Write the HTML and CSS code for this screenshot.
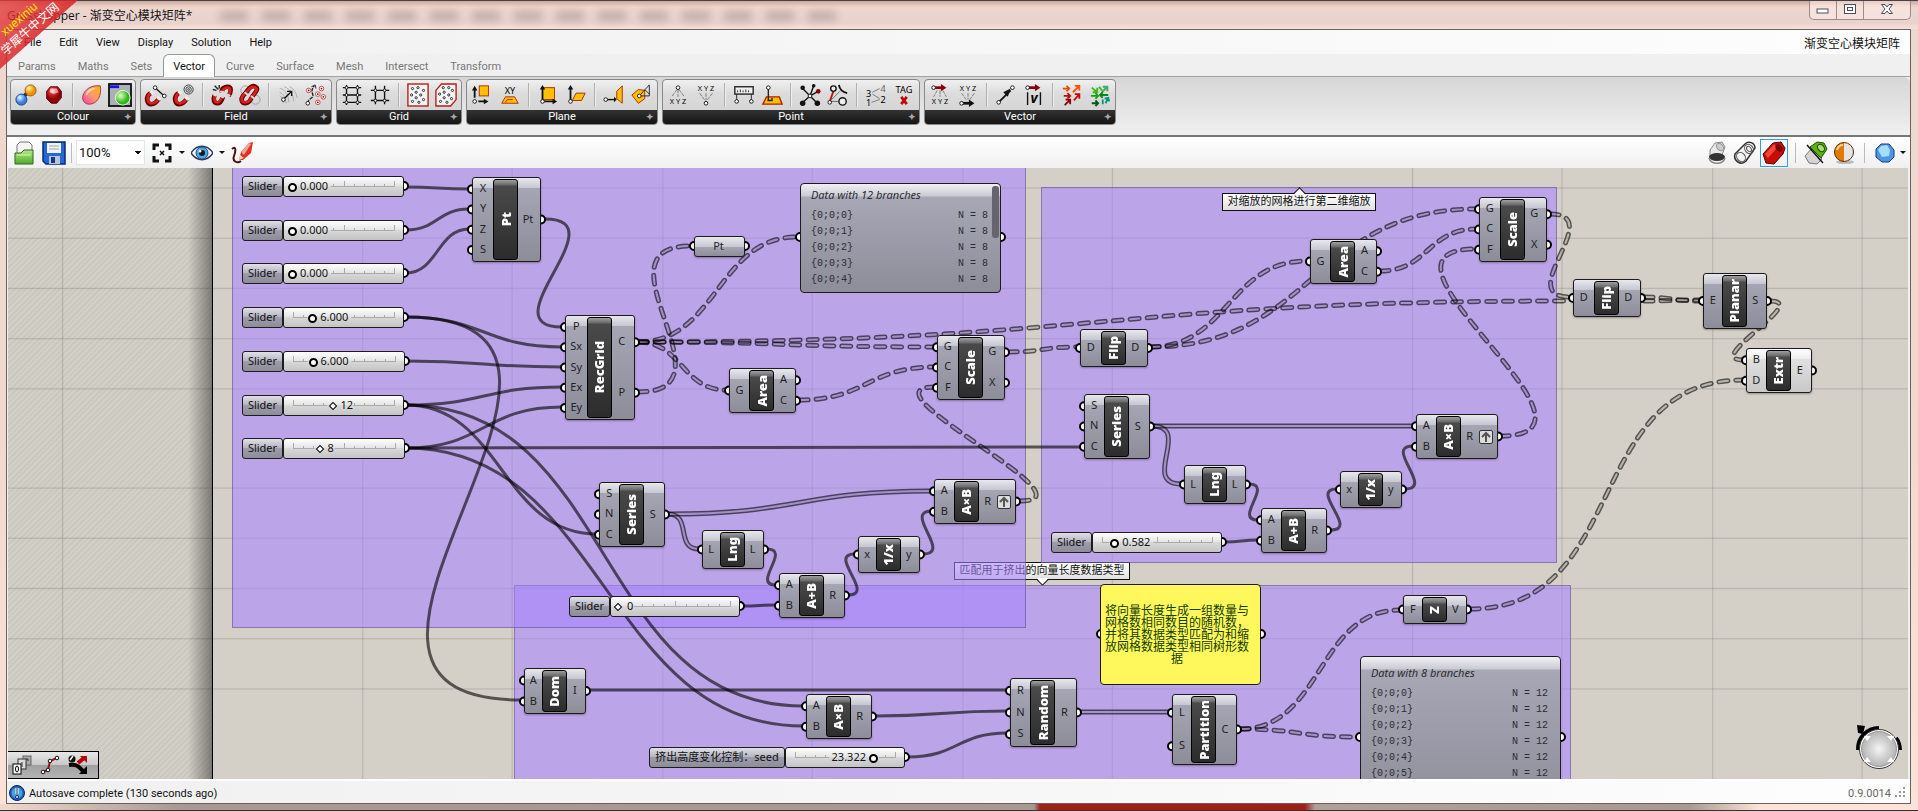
FILE: index.html
```
<!DOCTYPE html>
<html lang="en">
<head>
  <meta charset="UTF-8">
  <meta name="viewport" content="width=device-width, initial-scale=1.0">
  <title>Grasshopper - 渐变空心模块矩阵*</title>
  <link rel="stylesheet" href="styles.css">
</head>
<body>
  <svg class="defs" width="0" height="0" aria-hidden="true">
    <defs>
      <radialGradient id="gBlue" cx=".35" cy=".3"><stop offset="0" stop-color="#dff"/><stop offset="1" stop-color="#3c7ae0"/></radialGradient>
      <radialGradient id="gOrange" cx=".35" cy=".3"><stop offset="0" stop-color="#fff3a0"/><stop offset="1" stop-color="#f09000"/></radialGradient>
      <radialGradient id="gRed" cx=".4" cy=".25"><stop offset="0" stop-color="#ffd0d0"/><stop offset=".4" stop-color="#d8302c"/><stop offset="1" stop-color="#8e0008"/></radialGradient>
      <radialGradient id="gGreen" cx=".35" cy=".35"><stop offset="0" stop-color="#eaffc0"/><stop offset="1" stop-color="#2eb81c"/></radialGradient>
      <radialGradient id="gKnob"><stop offset="0" stop-color="#f4f4f4"/><stop offset="1" stop-color="#b4b4b4"/></radialGradient>
      <linearGradient id="gEgg" x1="1" y1="0" x2="0" y2="1"><stop offset="0" stop-color="#ffb400"/><stop offset=".5" stop-color="#ff9a70"/><stop offset="1" stop-color="#f040a8"/></linearGradient>
      <linearGradient id="gFolder" x1="0" y1="0" x2="0" y2="1"><stop offset="0" stop-color="#b8e88a"/><stop offset="1" stop-color="#4faa2c"/></linearGradient>
      <linearGradient id="gHalf"><stop offset=".5" stop-color="#e07a00"/><stop offset=".5" stop-color="#e4e4e4"/></linearGradient>
    </defs>
  </svg>

  <div class="window">
    <header class="titlebar">
      <div class="glass"></div>
      <h1>Grasshopper - 渐变空心模块矩阵*</h1>
      <div class="window-buttons">
        <button aria-label="Minimize"><svg width="14" height="14"><rect x="1" y="6" width="11" height="4" fill="#fff" stroke="#4a4f60"/></svg></button>
        <button aria-label="Maximize"><svg width="14" height="14"><rect x="1.5" y="1.5" width="11" height="9" fill="#fff" stroke="#4a4f60"/><rect x="4.5" y="4.5" width="5" height="3" fill="#fff" stroke="#4a4f60"/></svg></button>
        <button aria-label="Close"><svg width="14" height="14"><path d="M1.5 1.5h3.5l2 2.5 2-2.5h3.5l-3.5 4.500 3.500 4.500h-3.500l-2-2.500-2 2.500h-3.500l3.500-4.500z" fill="#fff" stroke="#4a4f60"/></svg></button>
      </div>
    </header>

    <div class="client">
      <nav class="menubar">
        <button>File</button>
        <button>Edit</button>
        <button>View</button>
        <button>Display</button>
        <button>Solution</button>
        <button>Help</button>
        <span class="document-name">渐变空心模块矩阵</span>
      </nav>

      <nav class="tabs">
        <button>Params</button>
        <button>Maths</button>
        <button>Sets</button>
        <button class="active">Vector</button>
        <button>Curve</button>
        <button>Surface</button>
        <button>Mesh</button>
        <button>Intersect</button>
        <button>Transform</button>
      </nav>

      <div class="ribbon">
        <section class="panel-group">
          <div class="tools">
            <button aria-label="Colour blend"><svg viewBox="0 0 24 24"><path d="M9 14l6-6" stroke="#333" stroke-width="4"/><circle cx="7" cy="17" r="6" fill="url(#gBlue)" stroke="#123a8a"/><circle cx="17" cy="7" r="6" fill="url(#gOrange)" stroke="#a05a00"/></svg></button>
            <button aria-label="Colour sphere"><svg viewBox="0 0 24 24"><path d="M8 3h8l4 5v7l-5 6H9l-5-5V8z" fill="url(#gRed)" stroke="#5c0006"/><path d="M8 5h7l2 4-5 2-5-2z" fill="#fff" opacity=".55"/></svg></button>
            <i></i>
            <button aria-label="Gradient egg"><svg viewBox="0 0 24 24"><path d="M21 2c2 10-3 20-12 20C4 22 1 18 2 13 4 6 11 1 21 2z" fill="url(#gEgg)" stroke="#a8284c"/><path d="M6 12c1-4 5-7 9-7" stroke="#fff" stroke-width="2" opacity=".6" fill="none"/></svg></button>
            <button aria-label="Colour picker"><svg viewBox="0 0 24 24"><rect x="0" y="0" width="24" height="24" fill="#aab0b8" stroke="#111" stroke-width="2"/><path d="M1 3h10" stroke="#11e" stroke-width="3"/><circle cx="15" cy="15" r="8" fill="url(#gGreen)" stroke="#e8ffe0"/></svg></button>
          </div>
          <h2>Colour<b>✦</b></h2>
        </section>

        <section class="panel-group">
          <div class="tools">
            <button aria-label="Line charge"><svg viewBox="0 0 24 24"><path d="M6 10c-6 4-4 12 1 12 4 0 6-3 8-6" fill="none" stroke="#600" stroke-width="5"/><path d="M6 10c-5 4-3 11 1 11 3 0 6-2 8-5" fill="none" stroke="#d82020" stroke-width="3"/><path d="M6 8l3 3M13 14l4 3" stroke="#eee" stroke-width="3"/><path d="M11 4l10 9" stroke="#111" stroke-width="1.5"/><circle cx="11" cy="4" r="2" fill="#fff" stroke="#111"/><circle cx="21" cy="13" r="2" fill="#fff" stroke="#111"/></svg></button>
            <button aria-label="Point charge"><svg viewBox="0 0 24 24"><path d="M6 10c-6 4-4 12 1 12 4 0 6-3 8-6" fill="none" stroke="#600" stroke-width="5"/><path d="M6 10c-5 4-3 11 1 11 3 0 6-2 8-5" fill="none" stroke="#d82020" stroke-width="3"/><path d="M6 8l3 3M13 14l4 3" stroke="#eee" stroke-width="3"/><g fill="none" stroke="#333"><circle cx="17" cy="6" r="5"/><circle cx="17" cy="6" r="3"/><circle cx="17" cy="6" r="1"/></g></svg></button>
            <i></i>
            <button aria-label="Break field"><svg viewBox="0 0 24 24"><path d="M4 12c-2 5-1 9 3 9s5-4 6-7M12 9c-1-4 3-6 6-6 5 0 4 6 1 10" fill="none" stroke="#600" stroke-width="5"/><path d="M4 13c-1 4 0 7 3 7s4-3 5-6M13 9c-1-3 2-5 5-5 4 0 3 5 1 8" fill="none" stroke="#d82020" stroke-width="3"/><path d="M2 11l4 2M10 13l4 2M10 8l4 1M17 11l4 2" stroke="#ddd" stroke-width="2"/><path d="M2 6l4 1M4 2l4 4M9 1v4" stroke="#222" stroke-width="1.5"/></svg></button>
            <button aria-label="Merge fields"><svg viewBox="0 0 24 24"><g fill="none" stroke="#999"><circle cx="7" cy="7" r="5"/><circle cx="18" cy="17" r="5"/></g><path d="M7 10c-6 5-5 11 0 11s6-5 8-8c3-4 7-8 3-10-4-3-8 3-11 7" fill="none" stroke="#600" stroke-width="5"/><path d="M7 10c-6 5-5 10 0 10s6-4 8-7c3-4 6-7 3-9-4-3-8 2-11 6" fill="none" stroke="#d82020" stroke-width="3"/><path d="M6 9l4 3M13 13l4 3" stroke="#ddd" stroke-width="2"/></svg></button>
            <i></i>
            <button aria-label="Evaluate field"><svg viewBox="0 0 24 24"><g stroke="#aaa" fill="none"><path d="M3 5c4 0 9 4 10 15M3 9c3 1 6 5 7 12M8 3c6 2 10 8 10 16M14 3c4 2 7 6 8 12M3 13c2 1 4 4 4 8"/></g><path d="M7 17l9-9m-5 0h5v5" fill="none" stroke="#111" stroke-width="1.5"/><circle cx="7" cy="17" r="2" fill="#fff" stroke="#111"/></svg></button>
            <button aria-label="Field line"><svg viewBox="0 0 24 24"><path d="M3 21c0-6 8-5 5-11-1-3 0-5 2-8" fill="none" stroke="#222" stroke-width="1.5" stroke-dasharray="4 1"/><path d="M7 3l4-2 1 4" fill="none" stroke="#222"/><g fill="#fff" stroke="#b04848"><circle cx="4" cy="7" r="2.5"/><circle cx="18" cy="5" r="2.5"/><circle cx="14" cy="11" r="2.5"/><circle cx="20" cy="14" r="2.5"/><circle cx="14" cy="20" r="2.5"/></g><g fill="#900"><circle cx="4" cy="7" r="1"/><circle cx="18" cy="5" r="1"/><circle cx="14" cy="11" r="1"/><circle cx="20" cy="14" r="1"/><circle cx="14" cy="20" r="1"/></g><circle cx="3" cy="21" r="2" fill="#fff" stroke="#111"/></svg></button>
          </div>
          <h2>Field<b>✦</b></h2>
        </section>

        <section class="panel-group">
          <div class="tools">
            <button aria-label="Rectangular grid"><svg viewBox="0 0 24 24"><path d="M2 4h20M2 12h20M2 20h20M6 1v22M18 1v22" stroke="#111" stroke-width="1.5"/><g fill="#fff" stroke="#111"><circle cx="6" cy="4" r="1.5"/><circle cx="18" cy="4" r="1.5"/><circle cx="6" cy="12" r="1.5"/><circle cx="18" cy="12" r="1.5"/><circle cx="6" cy="20" r="1.5"/><circle cx="18" cy="20" r="1.5"/></g></svg></button>
            <button aria-label="Square grid"><svg viewBox="0 0 24 24"><path d="M2 7h20M2 18h20M7 2v20M17 2v20" stroke="#111" stroke-width="1.5"/><g fill="#fff" stroke="#111"><circle cx="7" cy="7" r="1.5"/><circle cx="17" cy="7" r="1.5"/><circle cx="7" cy="18" r="1.5"/><circle cx="17" cy="18" r="1.5"/></g></svg></button>
            <i></i>
            <button aria-label="Populate 2D"><svg viewBox="0 0 24 24"><rect x="1" y="0" width="22" height="24" fill="#f4f4f4" stroke="#b81c10" stroke-width="1.5"/><g fill="none" stroke="#222"><circle cx="6" cy="5" r="1.2"/><circle cx="12" cy="4" r="1.2"/><circle cx="18" cy="7" r="1.2"/><circle cx="10" cy="9" r="1.2"/><circle cx="5" cy="12" r="1.2"/><circle cx="15" cy="12" r="1.2"/><circle cx="10" cy="15" r="1.2"/><circle cx="6" cy="19" r="1.2"/><circle cx="13" cy="20" r="1.2"/><circle cx="18" cy="17" r="1.2"/></g></svg></button>
            <button aria-label="Populate 3D"><svg viewBox="0 0 24 24"><path d="M7 0h16v17l-6 7H1V7z" fill="#f4f4f4" stroke="#b81c10" stroke-width="1.5"/><g fill="none" stroke="#222"><circle cx="9" cy="4" r="1.2"/><circle cx="15" cy="4" r="1.2"/><circle cx="19" cy="7" r="1.2"/><circle cx="10" cy="9" r="1.2"/><circle cx="5" cy="11" r="1.2"/><circle cx="15" cy="12" r="1.2"/><circle cx="10" cy="15" r="1.2"/><circle cx="6" cy="19" r="1.2"/><circle cx="13" cy="20" r="1.2"/><circle cx="18" cy="16" r="1.2"/></g></svg></button>
          </div>
          <h2>Grid<b>✦</b></h2>
        </section>

        <section class="panel-group">
          <div class="tools">
            <button aria-label="Align plane"><svg viewBox="0 0 24 24"><rect x="9" y="2" width="10" height="11" fill="#ffc000" stroke="#a82800"/><path d="M4 15V5M8 19h7" stroke="#111" stroke-width="2"/><path d="M1 7l3-5 3 5zM14 16l5 3-5 3z" fill="#111"/><circle cx="4" cy="19" r="2" fill="#fff" stroke="#111"/></svg></button>
            <button aria-label="XY plane"><svg viewBox="0 0 24 24"><path d="M7 14h10l4 7H3z" fill="#ffc000" stroke="#a82800"/><path d="M7 20l2-3h6" fill="none" stroke="#a82800"/><text x="12" y="11" text-anchor="middle" font-size="10">XY</text></svg></button>
            <i></i>
            <button aria-label="Plane offset"><svg viewBox="0 0 24 24"><rect x="6" y="4" width="13" height="13" fill="#ffc000" stroke="#a82800"/><path d="M6 20V5M6 19h12" stroke="#111" stroke-width="2"/><path d="M3 6l3-5 3 5zM17 16l5 3-5 3z" fill="#111"/><circle cx="6" cy="19" r="2" fill="#fff" stroke="#111"/></svg></button>
            <button aria-label="Plane origin"><svg viewBox="0 0 24 24"><path d="M8 18l4-8h10l-4 8z" fill="#ffc000" stroke="#a82800"/><path d="M6 19V5" stroke="#111" stroke-width="2"/><path d="M3 6l3-5 3 5z" fill="#111"/><circle cx="6" cy="19" r="2" fill="#fff" stroke="#111"/></svg></button>
            <i></i>
            <button aria-label="Plane closest point"><svg viewBox="0 0 24 24"><path d="M15 8l6-6v19l-6-5z" fill="#ffc000" stroke="#a82800"/><path d="M4 17h9" stroke="#111" stroke-width="1.5"/><circle cx="3" cy="17" r="2" fill="#fff" stroke="#111"/><path d="M12 14l3 3-3 3z" fill="#111"/></svg></button>
            <button aria-label="Rotate plane"><svg viewBox="0 0 24 24"><path d="M1 12l7-6 7 1v9l-7 5z" fill="#ffc000" stroke="#a82800"/><path d="M8 14L20 1v12H9M15 6l5 5" fill="none" stroke="#222"/><circle cx="9" cy="13" r="2" fill="#fff" stroke="#111"/></svg></button>
          </div>
          <h2>Plane<b>✦</b></h2>
        </section>

        <section class="panel-group">
          <div class="tools">
            <button aria-label="Deconstruct point"><svg viewBox="0 0 24 24"><path d="M11 6l-6 8M12 6v8M13 6l6 8" stroke="#777" stroke-dasharray="4 1"/><circle cx="12" cy="4" r="2" fill="#fff" stroke="#111"/><text x="12" y="22" text-anchor="middle" font-size="8">X Y Z</text></svg></button>
            <button aria-label="Construct point"><svg viewBox="0 0 24 24"><path d="M5 10l6 8M12 10v8M19 10l-6 8" stroke="#777" stroke-dasharray="4 1"/><circle cx="12" cy="21" r="2" fill="#fff" stroke="#111"/><text x="12" y="8" text-anchor="middle" font-size="8">X Y Z</text></svg></button>
            <i></i>
            <button aria-label="Distance"><svg viewBox="0 0 24 24"><path d="M4 10v8M20 10v8" stroke="#222"/><rect x="2" y="3" width="20" height="8" fill="#eee" stroke="#222" stroke-width="1.5"/><path d="M5 9V7M8 9V6M11 9V7M14 9V6M17 9V7" stroke="#222"/><circle cx="4" cy="19" r="2" fill="#fff" stroke="#111"/><circle cx="20" cy="19" r="2" fill="#fff" stroke="#111"/></svg></button>
            <button aria-label="Project point"><svg viewBox="0 0 24 24"><path d="M6 14h14l3 8H2z" fill="#ffc000" stroke="#b02000" stroke-width="1.5"/><path d="M7 18h5v-3M8 5v13" fill="none" stroke="#222" stroke-width="1.5"/><circle cx="8" cy="4" r="2" fill="#fff" stroke="#111"/></svg></button>
            <i></i>
            <button aria-label="Closest points"><svg viewBox="0 0 24 24"><path d="M12 13L4 5M12 13L16 2M12 13L3 21M12 13l8 8M12 13l9-5" stroke="#111" stroke-width="1.5"/><g fill="#111"><circle cx="4" cy="4" r="2.500"/><circle cx="16" cy="2" r="2"/><circle cx="4" cy="21" r="3"/><circle cx="20" cy="21" r="3"/></g><circle cx="21" cy="8" r="2.5" fill="#8a0008"/><circle cx="12" cy="13" r="2" fill="#fff" stroke="#111"/></svg></button>
            <button aria-label="Pull point"><svg viewBox="0 0 24 24"><path d="M3 19L7 8" stroke="#c01010" stroke-width="2"/><path d="M3 19L14 8M3 19h10" stroke="#666"/><path d="M13 1c1 6 4 8 9 9" stroke="#111" stroke-width="2" fill="none"/><g fill="#eee" stroke="#111" stroke-width="1.5"><circle cx="7" cy="5" r="3"/><circle cx="17" cy="19" r="4"/></g><circle cx="3" cy="20" r="2" fill="#fff" stroke="#111"/></svg></button>
            <i></i>
            <button aria-label="Sort points"><svg viewBox="0 0 24 24"><path d="M8 9l8-4M8 11l8 5M7 20l9-3" stroke="#777"/><text x="1" y="14" font-size="10">3</text><text x="17" y="9" font-size="10" fill="#666">4</text><text x="17" y="21" font-size="10">2</text><text x="1" y="24" font-size="10">1</text></svg></button>
            <button aria-label="Text tag"><svg viewBox="0 0 24 24"><text x="12" y="10" text-anchor="middle" font-size="10">TAG</text><path d="M9 14l6 8M15 14l-6 8" stroke="#c00808" stroke-width="3"/></svg></button>
          </div>
          <h2>Point<b>✦</b></h2>
        </section>

        <section class="panel-group">
          <div class="tools">
            <button aria-label="Deconstruct vector"><svg viewBox="0 0 24 24"><path d="M6 4h8" stroke="#8a0008" stroke-width="3"/><path d="M13 0l6 4-6 4z" fill="#8a0008"/><path d="M9 7l-4 7M12 7v7M15 7l4 7" stroke="#777" stroke-dasharray="4 1"/><circle cx="5" cy="4" r="2" fill="#fff" stroke="#111"/><text x="12" y="22" text-anchor="middle" font-size="8">X Y Z</text></svg></button>
            <button aria-label="Vector XYZ"><svg viewBox="0 0 24 24"><path d="M5 10l5 7M12 10v7M19 10l-5 7" stroke="#777" stroke-dasharray="4 1"/><path d="M6 21h8" stroke="#111" stroke-width="3"/><path d="M13 17l6 4-6 4z" fill="#111"/><circle cx="5" cy="21" r="2" fill="#fff" stroke="#111"/><text x="12" y="8" text-anchor="middle" font-size="8">X Y Z</text></svg></button>
            <i></i>
            <button aria-label="Vector 2Pt"><svg viewBox="0 0 24 24"><path d="M5 19L17 7" stroke="#111" stroke-width="2"/><path d="M9 9l8-4-3 9z" fill="#111"/><circle cx="4" cy="20" r="2" fill="#fff" stroke="#111"/><circle cx="19" cy="4" r="2" fill="#fff" stroke="#111"/></svg></button>
            <button aria-label="Vector length"><svg viewBox="0 0 24 24"><path d="M6 4h8" stroke="#8a0008" stroke-width="3"/><path d="M13 0l6 4-6 4z" fill="#8a0008"/><circle cx="5" cy="4" r="2" fill="#fff" stroke="#111"/><path d="M5 9v14M19 9v14" stroke="#111" stroke-width="1.5"/><text x="12" y="21" text-anchor="middle" font-size="15" font-weight="bold" font-style="italic">v</text></svg></button>
            <i></i>
            <button aria-label="Amplitude"><svg viewBox="0 0 24 24"><g stroke-width="2" fill="none"><path d="M2 5h7M6 2l3 3-3 3" stroke="#e05010"/><path d="M13 9l7-7m-5 0h5v5" stroke="#ff5008"/><path d="M3 13h7M7 10l3 3-3 3" stroke="#b81010"/><path d="M14 18l6-7m-5 0h5v5" stroke="#c80808"/><path d="M4 23l6-6M5 17h5v5" stroke="#8a0008"/></g></svg></button>
            <button aria-label="Unit vector"><svg viewBox="0 0 24 24"><g stroke-width="2" fill="none"><path d="M3 4l6 5M9 4v5H4" stroke="#38b818"/><path d="M14 9l6-6m-5 0h5v5" stroke="#40a868"/><path d="M2 13h8M7 10l3 3-3 3" stroke="#18a010"/><path d="M21 12h-8M15 9l-3 3 3 3" stroke="#088818"/><path d="M3 21h7M7 18l3 3-3 3" stroke="#005818"/><path d="M15 22v-5M18 21l3-6m-4 1l4-1 1 4" stroke="#009878"/><path d="M11 3l3 4" stroke="#38b818"/></g></svg></button>
          </div>
          <h2>Vector<b>✦</b></h2>
        </section>
      </div>

      <div class="toolbar">
        <button class="tool" aria-label="Open"><svg width="20" height="24" viewBox="0 0 20 24"><path d="M3 4l3-3h9l3 3v9H3z" fill="#f4f4f4" stroke="#777"/><path d="M1 12h6l3-3h9v14H1z" fill="url(#gFolder)" stroke="#2d6b18"/><path d="M3 14h14" stroke="#d8f8b8"/></svg></button>
        <button class="tool" aria-label="Save"><svg width="24" height="24" viewBox="0 0 24 24"><path d="M1 1h22v22H4l-3-3z" fill="#2468d8" stroke="#0a2a70" stroke-width="1.5"/><rect x="5" y="2" width="14" height="10" fill="#f0f4f8"/><path d="M7 5h10M7 8h10" stroke="#9aa"/><rect x="7" y="15" width="11" height="8" fill="#b8c4d8"/><rect x="9" y="16" width="4" height="6" fill="#123a8a"/></svg></button>
        <i class="sep"></i>
        <select class="zoom" aria-label="Zoom"><option>100%</option></select>
        <button class="tool" aria-label="Zoom extents"><svg width="20" height="20" viewBox="0 0 20 20"><path d="M2 7V2h5M13 2h5v5M18 13v5h-5M7 18H2v-5" fill="none" stroke="#111" stroke-width="3"/><path d="M8 8l4 4M12 8l-4 4" stroke="#111" stroke-width="1.5"/></svg></button>
        <button class="arrow" aria-label="Zoom options"></button>
        <button class="tool" aria-label="Preview"><svg width="22" height="18" viewBox="0 0 22 18"><path d="M0 9C6 0 16 0 22 9 16 18 6 18 0 9z" fill="#f4fbff" stroke="#335" stroke-width="1.5"/><circle cx="11" cy="9" r="6" fill="#4aa8e0" stroke="#165080"/><circle cx="11" cy="9" r="3" fill="#0a1828"/><circle cx="9" cy="7" r="1.5" fill="#fff"/></svg></button>
        <button class="arrow" aria-label="Preview options"></button>
        <button class="tool" aria-label="Sketch"><svg width="24" height="22" viewBox="0 0 24 22"><path d="M2 7c4-4 4 2 2 7s3 8 7 5" fill="none" stroke="#501010" stroke-width="2"/><path d="M9 18l2-8 8-9 4-1-2 11-8 7z" fill="#e03028"/><path d="M11 10l8-9 2 1-7 11z" fill="#f8a090"/><path d="M9 18l1-5 4 3z" fill="#f8d8a0"/></svg></button>

        <div class="toolbar-right">
          <button class="tool" aria-label="No preview"><svg width="20" height="24" viewBox="0 0 20 24"><path d="M3 9l5-7 7-1 3 5-3 8-12 2z" fill="#e8e8e8" stroke="#888"/><ellipse cx="13" cy="6" rx="3" ry="4" fill="#ccc" stroke="#999" transform="rotate(-40 13 6)"/><ellipse cx="10" cy="16" rx="8" ry="4" fill="#333"/><path d="M2 17c2 7 14 7 16 0" fill="none" stroke="#888" stroke-width="1.5"/></svg></button>
          <button class="tool" aria-label="Wireframe preview"><svg width="24" height="24" viewBox="0 0 24 24"><path d="M2 13L12 3c3-3 10-2 10 4L13 20c-5 5-13 0-11-7z" fill="#f2f2f2" stroke="#333" stroke-width="1.5"/><g fill="none" stroke="#555"><ellipse cx="16" cy="8" rx="4" ry="5" transform="rotate(-40 16 8)"/><ellipse cx="16" cy="8" rx="2" ry="3" transform="rotate(-40 16 8)"/><ellipse cx="8" cy="16" rx="4" ry="5" transform="rotate(-40 8 16)"/></g></svg></button>
          <button class="tool selected" aria-label="Shaded preview"><svg width="24" height="24" viewBox="0 0 24 24"><path d="M1 13L11 2l8-1 4 6-2 6-9 10-8-1z" fill="#c80c08" stroke="#500"/><path d="M3 13L12 3l3 4-9 10z" fill="#f04838"/><ellipse cx="17" cy="7" rx="3" ry="4" fill="#7a0000" transform="rotate(-40 17 7)"/></svg></button>
          <i class="sep"></i>
          <button class="tool" aria-label="Selected preview"><svg width="24" height="24" viewBox="0 0 24 24"><path d="M1 15l7-8 10 11-5 5-8-1z" fill="#d4d4d4" stroke="#777"/><path d="M6 6l7-5 7 1 3 6-6 9z" fill="#5cb010" stroke="#284c00"/><ellipse cx="17" cy="7" rx="3" ry="4" fill="#a8e070" stroke="#284c00" transform="rotate(-40 17 7)"/><path d="M3 4l16 18" stroke="#111" stroke-width="1.5"/></svg></button>
          <button class="tool" aria-label="Document preview"><svg width="22" height="24" viewBox="0 0 22 24"><ellipse cx="12" cy="21" rx="9" ry="2" fill="#bbb"/><circle cx="11" cy="11" r="9.5" fill="url(#gHalf)" stroke="#622c00"/><path d="M4 9c1-4 4-5 6-5" stroke="#ffd890" stroke-width="2" fill="none"/></svg></button>
          <i class="sep"></i>
          <button class="tool" aria-label="Mesh quality"><svg width="20" height="22" viewBox="0 0 20 22"><path d="M6 2h8l5 6v7l-5 5H7l-6-5V7z" fill="#4c96e4" stroke="#143a80"/><path d="M6 4l6-1 3 5-1 6-7 1-4-7z" fill="#a8dcfc"/></svg></button>
          <button class="arrow" aria-label="Mesh options"></button>
        </div>
      </div>

      <main class="canvas">
        <div class="world" id="world">
          <div class="page-edge"></div>
        </div>
        <div class="widget-bar">
          <button aria-label="Profiler"><svg width="20" height="20" viewBox="0 0 20 20"><rect x="11" y="1" width="8" height="9" fill="#aaa" stroke="#666"/><rect x="6" y="4" width="8" height="10" fill="#ddd" stroke="#333"/><rect x="1" y="9" width="8" height="10" fill="#fff" stroke="#000"/><ellipse cx="5" cy="14" rx="1.5" ry="3" fill="none" stroke="#000"/><path d="M10 7v5M14 4h2v2" stroke="#333" fill="none"/></svg></button>
          <button aria-label="Align"><svg width="20" height="20" viewBox="0 0 20 20"><path d="M3 17l5-2 2-9 7-3" fill="none" stroke="#a01010" stroke-width="2"/><g fill="#fff" stroke="#111"><circle cx="3" cy="17" r="1.8"/><circle cx="8" cy="15" r="1.8"/><circle cx="10" cy="6" r="1.8"/><circle cx="17" cy="3" r="1.8"/></g></svg></button>
          <button aria-label="Route"><svg width="20" height="20" viewBox="0 0 20 20"><path d="M10 8l6-5" stroke="#b00" stroke-width="4"/><path d="M12 1h7v7z" fill="#b00"/><path d="M1 10c8-1 9 1 14 6" stroke="#000" stroke-width="4" fill="none"/><path d="M19 11v8h-8z"/><circle cx="4" cy="4" r="3.5" fill="#111"/><path d="M2 5l3-4" stroke="#fff" stroke-width="1.5"/></svg></button>
        </div>
        <svg class="compass" width="52" height="50" viewBox="0 0 52 50"><path d="M6 28A21 21 0 0 1 27 6M44 16a21 21 0 0 1 4 12" fill="none" stroke="#000" stroke-width="4"/><path d="M5 3l8 1-2 8-5-1z"/><circle cx="27" cy="27" r="19.500" fill="#fff" stroke="#333"/><circle cx="27" cy="27" r="17.500" fill="url(#gKnob)" stroke="#999"/><path d="M12 14l7 0-4 5zM42 14l-7 0 4 5zM12 40l7 0-4-5zM42 40l-7 0 4-5z" fill="#fff"/></svg>
      </main>

      <footer class="statusbar">
        <svg width="16" height="16" viewBox="0 0 16 16"><circle cx="8" cy="8" r="7.5" fill="#1c5cb8" stroke="#0a2468"/><circle cx="8" cy="8" r="5.5" fill="#48a0d8"/><path d="M8 3v6" stroke="#fff" stroke-width="3"/><path d="M8 3v6" stroke="#0a2468"/><circle cx="8" cy="12" r="1.5" fill="#fff" stroke="#0a2468"/></svg>
        <span>Autosave complete (130 seconds ago)</span>
        <span class="version">0.9.0014</span>
        <svg width="12" height="12" viewBox="0 0 12 12" fill="#999"><path d="M8 0h2v2H8zM8 4h2v2H8zM8 8h2v2H8zM4 4h2v2H4zM4 8h2v2H4zM0 8h2v2H0z"/></svg>
      </footer>
    </div>
  </div>

  <div class="corner-ribbon"><span class="latin">xuexiniu</span><span>学犀牛中文网</span></div>

  <script src="script.js"></script>
</body>
</html>
```

FILE: styles.css
```
* {
  box-sizing: border-box;
  margin: 0;
  padding: 0;
}

body {
  font-family: Roboto, "Noto Sans CJK SC", sans-serif;
  font-size: 11px;
  color: #111;
  height: 100vh;
  overflow: hidden;
}

button {
  font: inherit;
  color: inherit;
  background: none;
  border: none;
}

.defs {
  position: absolute;
}

.window {
  height: 100vh;
  display: flex;
  flex-direction: column;
  padding: 0 7px 6px 6px;
  border-bottom: 1px solid #333;
  background:
    linear-gradient(to right, #efd9ce 0, #a89a92 180px, #a89a92 1034px, #a02018 1040px, #a02018 1305px, #b0a098 1315px, #a89a92 1690px, #fbe3d8 1760px) bottom / 100% 6px no-repeat,
    linear-gradient(to bottom, #eed8ce, #f0d8cc 50%, #fbe3d8);
}

.titlebar {
  height: 29px;
  flex: none;
  display: flex;
  align-items: center;
  margin: 0 -7px 0 -6px;
  padding: 0 7px;
  border-top: 1px solid #4b4040;
  background: linear-gradient(to bottom, #c8aaa0, #f0d6ca 6px, #ead4d0 14px, #ead2cc 22px, #f6e2d8);
  position: relative;
  overflow: hidden;
}

.titlebar h1 {
  font: 12px "Open Sans", "Noto Sans CJK SC", sans-serif;
  position: relative;
}

.glass {
  position: absolute;
  left: 220px;
  top: 10px;
  width: 620px;
  height: 10px;
  opacity: 0.25;
  filter: blur(4px);
  background: repeating-linear-gradient(to right, #4b3c3c 0 28px, transparent 28px 42px);
}

.window-buttons {
  align-self: flex-start;
  margin-left: auto;
  display: flex;
  height: 19px;
  border: 1px solid #a08a86;
  border-top: none;
  border-radius: 0 0 5px 5px;
  background: rgba(255, 240, 236, 0.5);
  position: relative;
}

.window-buttons button {
  width: 27px;
  display: flex;
  justify-content: center;
  align-items: center;
  border-right: 1px solid #a08a86;
}

.window-buttons button:last-child {
  width: 46px;
  border-right: none;
}

.client {
  flex: 1;
  min-height: 0;
  display: flex;
  flex-direction: column;
  border: 1px solid #6a625e;
  background: #f0f0f0;
}

.menubar {
  height: 24px;
  flex: none;
  display: flex;
  align-items: center;
  padding: 0 10px 0 8px;
  background: linear-gradient(to right, #f0f0f0, #fdfdfd);
}

.menubar button {
  padding: 0 9px;
}

.document-name {
  margin-left: auto;
  font-size: 12px;
}

.tabs {
  height: 23px;
  flex: none;
  display: flex;
  align-items: stretch;
  border-bottom: 1px solid #a0a4a0;
}

.tabs button {
  padding: 2px 11px 0;
  color: #777;
}

.tabs .active {
  height: 23px;
  padding: 0 9px;
  color: #111;
  background: #fff;
  border: 1px solid #909890;
  border-bottom: none;
  border-radius: 6px 6px 0 0;
}

.ribbon {
  height: 58px;
  flex: none;
  display: flex;
  gap: 4px;
  align-items: flex-start;
  padding: 2px 3px;
  background: linear-gradient(to bottom, #d6d6d6, #f0f0f0);
  border-radius: 0 6px 0 0;
}

.panel-group {
  border: 1px solid #888;
  border-radius: 4px;
  background: linear-gradient(to bottom, #f0f0f0, #dcdcdc 30%, #d0d0d0);
}

.tools {
  display: flex;
  height: 30px;
  align-items: center;
  padding: 0 1px;
}

.tools button {
  width: 28px;
  height: 28px;
  padding: 3px;
}

.tools svg {
  display: block;
  width: 22px;
  height: 22px;
  overflow: visible;
  font-family: "Noto Sans", sans-serif;
}

.tools i {
  width: 2px;
  height: 24px;
  margin: 0 4px;
  border-left: 1px solid #b0b0b0;
  border-right: 1px solid #eee;
}

.panel-group h2 {
  font-size: 11px;
  font-weight: normal;
  line-height: 14px;
  text-align: center;
  color: #fff;
  border-radius: 0 0 3px 3px;
  background: linear-gradient(to bottom, #333, #141414);
  position: relative;
}

.panel-group h2 b {
  position: absolute;
  right: 3px;
  font-size: 9px;
  color: #aaa;
}

.toolbar {
  height: 33px;
  flex: none;
  display: flex;
  align-items: center;
  gap: 4px;
  padding: 0 4px 0 4px;
  border-top: 2px solid #777;
  background: linear-gradient(to bottom, #fff, #f0f0f0);
}

.tool {
  width: 26px;
  height: 28px;
  display: flex;
  align-items: center;
  justify-content: center;
}

.tool.selected {
  width: 28px;
  border: 1px solid #3399ff;
}

.sep {
  width: 1px;
  height: 20px;
  background: #bbb;
}

.zoom {
  width: 69px;
  height: 25px;
  padding-left: 2px;
  appearance: none;
  font: 13px Roboto, sans-serif;
  color: #111;
  border: 1px solid #e0e4ec;
  background:
    linear-gradient(to bottom left, #111 50%, transparent 50%) 57px 10px / 4px 4px no-repeat,
    linear-gradient(to bottom right, #111 50%, transparent 50%) 61px 10px / 4px 4px no-repeat,
    #fff;
}

.arrow {
  width: 6px;
  height: 3px;
  background: #111;
  clip-path: polygon(0 0, 100% 0, 50% 100%);
}

.toolbar-right {
  margin-left: auto;
  display: flex;
  align-items: center;
  gap: 2px;
}

.toolbar-right .sep {
  margin: 0 5px;
}

/* canvas */

.canvas {
  flex: 1;
  min-height: 0;
  margin: 0 2px 0 1px;
  position: relative;
  overflow: hidden;
  background-color: #d4d0c8;
  font-family: "Noto Sans", "Noto Sans CJK SC", sans-serif;
}

/* world coordinates start above and left of the visible area */
.world {
  position: absolute;
  left: -8px;
  top: -168px;
  width: 3000px;
  height: 2000px;
}

.page-edge {
  position: absolute;
  left: 0;
  top: 0;
  width: 213px;
  height: 100%;
  border-right: 1px solid #000;
  background:
    linear-gradient(to right, transparent 188px, rgba(0, 0, 0, 0.4)),
    repeating-linear-gradient(135deg, #d2cfc6 0 2px, #cbc8bf 2px 4px);
}

.grid,
.wires {
  position: absolute;
  left: 0;
  top: 0;
  width: 100%;
  height: 100%;
}

.grid {
  background:
    repeating-linear-gradient(to right, rgba(0, 0, 0, 0.13) 0 1px, transparent 1px 150px) 62px 0,
    repeating-linear-gradient(to bottom, rgba(0, 0, 0, 0.13) 0 1px, transparent 1px 50px) 0 38px;
}

.group {
  position: absolute;
  background: rgba(167, 131, 255, 0.56);
  border: 1px solid rgba(60, 50, 90, 0.4);
}

.bubble {
  position: absolute;
  height: 18px;
  line-height: 14px;
  text-align: center;
  border: 1px solid #111;
  background: linear-gradient(to bottom, #fff, #e0e0e0);
}

.bubble::after {
  content: "";
  position: absolute;
  left: calc(50% - 4px);
  top: -5px;
  width: 8px;
  height: 8px;
  transform: rotate(45deg);
  border: solid #111;
  border-width: 1px 0 0 1px;
  background: linear-gradient(135deg, #fff 55%, transparent 55%);
}

.bubble.below::after {
  top: 12px;
  transform: rotate(225deg);
}

.node {
  position: absolute;
  display: flex;
  padding-right: 2px;
  border: 1px solid #1c1c1c;
  border-radius: 3px;
  color: #222;
  background: linear-gradient(to bottom, #e8e8ee, #c6c6d0 10px, #a6a5b3 10px, #8d8c99);
  box-shadow: 0 1px 2px rgba(0, 0, 0, 0.3);
}

.node.light {
  background: linear-gradient(to bottom, #fff, #ececec 10px, #e0e0e0 10px, #c8c8c8);
}

.node .ports {
  flex: 1;
  display: flex;
  flex-direction: column;
  padding: 1px 0;
}

.node .ports span {
  flex: 1;
  display: flex;
  align-items: center;
  justify-content: center;
  line-height: 12px;
  padding-bottom: 2px;
}

.node .capsule {
  width: 25px;
  flex: none;
  margin: 1px 0;
  display: flex;
  align-items: center;
  justify-content: center;
  font-size: 13px;
  font-weight: bold;
  line-height: 16px;
  color: #fff;
  border: 1px solid #000;
  border-radius: 3px;
  background: linear-gradient(to bottom, #a0a0a0, #686868 5px, #4a4a4a 6px, #2c2c2c);
}

.node .capsule b {
  writing-mode: vertical-rl;
  text-orientation: sideways;
  white-space: nowrap;
  transform: rotate(180deg);
}

.node .graft {
  align-self: center;
  width: 14px;
  height: 14px;
  margin-right: 2px;
  border: 1px solid #333;
  border-radius: 2px;
  background: #ddd;
}

.node .graft svg {
  display: block;
}

.node.param {
  align-items: center;
  justify-content: center;
  padding-bottom: 2px;
}

.slider {
  position: absolute;
  display: flex;
  height: 21px;
}

.slider label,
.slider .track {
  border: 1px solid #1c1c1c;
  border-radius: 3px;
}

.slider label {
  line-height: 17px;
  text-align: center;
  white-space: nowrap;
  background: linear-gradient(to bottom, #e0e0e8, #b4b3c0 9px, #9e9dab 9px, #8d8c99);
}

.slider .track {
  flex: 1;
  position: relative;
  background: linear-gradient(to bottom, #fff, #e4e4e4 9px, #dadada 9px, #c4c4c4);
}

.slider .ticks {
  position: absolute;
  left: 0;
  top: 0;
}

.slider output {
  position: absolute;
  top: 1px;
  line-height: 16px;
  white-space: nowrap;
}

.slider input {
  position: absolute;
  left: 4px;
  top: 0;
  width: calc(100% - 8px);
  height: 20px;
  appearance: none;
  background: none;
}

.slider input::-webkit-slider-thumb {
  appearance: none;
  width: 9px;
  height: 9px;
  border: 2px solid #000;
  border-radius: 50%;
  background: #fff;
}

.slider input.integer::-webkit-slider-thumb {
  width: 6px;
  height: 6px;
  border-width: 1px;
  border-radius: 0;
  transform: rotate(45deg);
}

.data-panel {
  position: absolute;
  padding: 4px 12px 4px 10px;
  border: 1px solid #1c1c1c;
  border-radius: 4px;
  color: #2c2c33;
  background: linear-gradient(to bottom, #f0f0f4, #cacad2 12px, #a8a7b5 13px, #8d8c99);
}

.data-panel.roomy {
  padding-top: 9px;
}

.data-panel h3 {
  font-size: 11px;
  font-weight: normal;
  font-style: italic;
  line-height: 14px;
  margin-bottom: 6px;
}

.data-panel p {
  display: flex;
  justify-content: space-between;
  font: 10px/16px "Liberation Mono", monospace;
  white-space: pre;
}

.data-panel .thumb {
  position: absolute;
  right: 1px;
  top: 2px;
  width: 7px;
  height: 52px;
  border-radius: 3px;
  background: #66656f;
}

.note {
  position: absolute;
  display: flex;
  align-items: center;
  padding: 0 8px 0 3px;
  border: 1px solid #1c1c1c;
  border-radius: 4px;
  background: #fff85c;
}

.note p {
  width: 146px;
  font-size: 12px;
  line-height: 12px;
  text-align: center;
  color: #143c00;
}

.widget-bar {
  position: absolute;
  left: 0;
  bottom: 0;
  display: flex;
  gap: 8px;
  height: 28px;
  padding: 3px 10px 0 4px;
  border: 1px solid #000;
  border-left: none;
  background: linear-gradient(to bottom, #e8e8e8, #c8c8c8 50%, #a0a0a0 51%, #b4b4b4);
}

.compass {
  position: absolute;
  right: 4px;
  bottom: 7px;
}

.statusbar {
  height: 24px;
  flex: none;
  display: flex;
  align-items: center;
  gap: 4px;
  padding: 2px 3px 0 2px;
  border-top: 2px solid #fff;
  background: linear-gradient(to right, #f0f0f0, #fdfdfd);
}

.version {
  margin-left: auto;
  color: #666;
}

.corner-ribbon {
  position: absolute;
  left: 0;
  top: 0;
  width: 78px;
  height: 69px;
  clip-path: polygon(0 0, 100% 0, 0 100%);
  background: linear-gradient(135deg, rgba(230, 60, 60, 0.75), rgba(205, 20, 25, 0.95));
  color: #fff;
}

.corner-ribbon span {
  position: absolute;
  left: -12px;
  top: 22px;
  width: 84px;
  font-size: 12px;
  line-height: 14px;
  text-align: center;
  transform: rotate(-41deg);
}

.corner-ribbon .latin {
  left: -23px;
  top: 12px;
  color: #ffe000;
}
```

FILE: script.js
```
const world = document.getElementById("world");

function add(className, x, y, w, h, html) {
  const el = document.createElement("div");
  el.className = className;
  el.style.left = x + "px";
  el.style.top = y + "px";
  if (w) el.style.width = w + "px";
  if (h) el.style.height = h + "px";
  el.innerHTML = html || "";
  world.appendChild(el);
  return el;
}

add("grid", 0, 0);
add("bubble below", 954, 562, 176, 0, "匹配用于挤出的向量长度数据类型");
add("group", 514, 585, 1057, 600);
add("group", 232, 0, 794, 628);
add("group", 1041, 187, 516, 376);
add("bubble", 1222, 193, 154, 0, "对缩放的网格进行第二维缩放");

// wires: x1, y1, x2, y2
const solid = [
  [406, 187, 469, 189], [406, 230, 469, 209], [406, 273, 469, 229],
  [406, 317, 562, 347], [406, 317, 521, 700], [406, 361, 562, 367],
  [406, 405, 562, 387], [406, 405, 597, 534], [406, 405, 803, 706],
  [406, 448, 562, 407], [406, 448, 1081, 447], [406, 448, 803, 726],
  [545, 219, 562, 327], [589, 690, 1007, 690], [875, 716, 1007, 711],
  [908, 757, 1007, 733], [743, 606, 776, 605], [767, 549, 776, 585],
  [848, 595, 855, 554], [923, 554, 932, 511], [1225, 542, 1258, 540],
  [1249, 484, 1258, 520], [1331, 530, 1337, 489], [1405, 489, 1413, 446]
];
const list = [
  [668, 514, 932, 491], [668, 514, 699, 549], [1152, 426, 1413, 426],
  [1152, 426, 1181, 484], [1080, 712, 1169, 712]
];
const tree = [
  [638, 342, 797, 237], [638, 342, 935, 347], [638, 342, 726, 390],
  [638, 342, 1570, 301], [638, 392, 691, 246], [799, 400, 935, 367],
  [1020, 501, 935, 387], [1008, 352, 1077, 347], [1150, 347, 1307, 261],
  [1150, 347, 1476, 209], [1380, 271, 1476, 229], [1500, 436, 1476, 249],
  [1550, 214, 1570, 297], [1644, 297, 1700, 301], [1644, 301, 1700, 300],
  [1770, 301, 1743, 360], [1470, 609, 1743, 380], [1240, 729, 1400, 610],
  [1240, 729, 1357, 737]
];

function bezier([x1, y1, x2, y2]) {
  const d = Math.max(Math.abs(x2 - x1) / 2, Math.abs(y2 - y1) * 0.7);
  return `M${x1} ${y1}C${x1 + d} ${y1} ${x2 - d} ${y2} ${x2} ${y2}`;
}

let wires = "";
let masks = "";
let count = 0;

// hollow wires are a thick stroke with a thin one masked out of it
function hollow(wire, dash) {
  const path = bezier(wire);
  const id = "m" + count++;
  masks += `<mask id="${id}" maskUnits="userSpaceOnUse" x="0" y="0" width="3000" height="2000">
    <rect width="3000" height="2000" fill="#fff"/>
    <path d="${path}" fill="none" stroke="#333" stroke-width="2" ${dash}/></mask>`;
  wires += `<path d="${path}" stroke-width="5" ${dash} mask="url(#${id})"/>`;
}

solid.forEach(w => wires += `<path d="${bezier(w)}" stroke-width="3"/>`);
list.forEach(w => hollow(w, ""));
tree.forEach(w => hollow(w, 'stroke-dasharray="9 8" stroke-linecap="round"'));

// name, x, y, w, h, inputs, outputs, extra class
const nodes = [
  ["Pt", 472, 177, 69, 85, "X Y Z S", "Pt"],
  ["RecGrid", 565, 315, 70, 105, "P Sx Sy Ex Ey", "C P"],
  ["Area", 729, 368, 67, 45, "G", "A C"],
  ["Scale", 937, 335, 68, 65, "G C F", "G X"],
  ["Flip", 1080, 329, 68, 38, "D", "D"],
  ["Area", 1310, 239, 67, 45, "G", "A C"],
  ["Scale", 1479, 197, 68, 65, "G C F", "G X"],
  ["Series", 1084, 394, 66, 65, "S N C", "S"],
  ["Lng", 1184, 465, 62, 39, "L", "L"],
  ["A+B", 1261, 508, 66, 45, "A B", "R"],
  ["1/x", 1340, 471, 62, 37, "x", "y"],
  ["A×B", 1416, 414, 82, 45, "A B", "R", "grafted"],
  ["Flip", 1573, 279, 68, 38, "D", "D"],
  ["Planar", 1703, 273, 64, 56, "E", "S"],
  ["Extr", 1746, 348, 66, 45, "B D", "E", "light"],
  ["Series", 599, 482, 66, 65, "S N C", "S"],
  ["Lng", 702, 530, 62, 39, "L", "L"],
  ["A+B", 779, 573, 66, 45, "A B", "R"],
  ["1/x", 858, 536, 62, 37, "x", "y"],
  ["A×B", 934, 479, 82, 45, "A B", "R", "grafted"],
  ["Dom", 524, 668, 62, 46, "A B", "I"],
  ["A×B", 806, 694, 66, 45, "A B", "R"],
  ["Random", 1010, 678, 67, 69, "R N S", "R"],
  ["Partition", 1172, 694, 65, 71, "L S", "C"],
  ["Z", 1403, 595, 64, 29, "F", "V"]
];

// label, x, y, label width, track width, position 0-100, value text, type
const sliders = [
  ["Slider", 242, 176, 41, 121, 0, "0.000"],
  ["Slider", 242, 220, 41, 121, 0, "0.000"],
  ["Slider", 242, 263, 41, 121, 0, "0.000"],
  ["Slider", 242, 307, 41, 121, 20, "6.000"],
  ["Slider", 242, 351, 41, 122, 20, "6.000"],
  ["Slider", 242, 395, 41, 121, 40, "12", "integer"],
  ["Slider", 242, 438, 41, 122, 27, "8", "integer"],
  ["Slider", 569, 596, 41, 130, 0, "0", "integer"],
  ["Slider", 1051, 532, 41, 130, 12, "0.582"],
  ["挤出高度变化控制：seed", 649, 747, 136, 120, 78, "23.322", "left"]
];

let grips = "";
const grip = (x, y) => grips += `<circle cx="${x}" cy="${y}" r="4" fill="#fff" stroke="#000" stroke-width="2"/>`;

nodes.forEach(([name, x, y, w, h, ins, outs]) => {
  [[ins, x], [outs, x + w]].forEach(([names, gx]) => {
    const n = names.split(" ").length;
    for (let i = 0; i < n; i++) grip(gx, y + 2 + (h - 4) * (i + 0.5) / n);
  });
});
sliders.forEach(([, x, y, lw, tw]) => grip(x + lw + tw, y + 10));
[[694, 246], [745, 246], [800, 237], [1001, 237], [1101, 634], [1261, 634], [1360, 737], [1561, 737]]
  .forEach(p => grip(p[0], p[1]));

world.insertAdjacentHTML("beforeend",
  `<svg class="wires"><defs>${masks}</defs><g fill="none" stroke="#000" stroke-opacity="0.6">${wires}</g>${grips}</svg>`);

const ports = names => `<div class="ports">${names.split(" ").map(n => `<span>${n}</span>`).join("")}</div>`;

nodes.forEach(([name, x, y, w, h, ins, outs, extra]) => {
  const graft = extra === "grafted"
    ? '<div class="graft"><svg width="12" height="12"><path d="M6 11V2M2 6l4-4 4 4" fill="none" stroke="#555" stroke-width="2"/></svg></div>'
    : "";
  add("node " + (extra || ""), x, y, w, h,
    `${ports(ins)}<div class="capsule"><b>${name}</b></div>${ports(outs)}${graft}`);
});

add("node param", 694, 236, 51, 21, "Pt");

sliders.forEach(([label, x, y, lw, tw, pos, value, type], i) => {
  const span = tw - 20;
  const at = 9 + span * pos / 100;
  const size = value.length * 6;
  const from = type === "left" ? at - size - 8 : at - 6;
  const to = type === "left" ? at + 6 : at + size + 8;
  let ticks = "";
  for (let t = 0; t <= 10; t++) {
    const tx = Math.round(9 + span * t / 10) + 0.5;
    if (tx < from || tx > to) ticks += `M${tx} ${t % 5 ? 7 : 4}V10`;
  }
  if (from > 9) ticks += `M9 9.5H${from}`;
  ticks += `M${to} 9.5H${9 + span}`;
  const side = type === "left" ? `right:${tw - at + 5}px` : `left:${at + 7}px`;
  add("slider", x, y, lw + tw, 0,
    `<label for="slider${i}" style="width:${lw}px">${label}</label>
     <div class="track">
       <svg class="ticks" width="${tw - 2}" height="19"><path d="${ticks}" fill="none" stroke="#aaa"/></svg>
       <input type="range" id="slider${i}" class="${type || ""}" min="0" max="100" value="${pos}">
       <output for="slider${i}" style="${side}">${value}</output>
     </div>`);
});

function dataPanel(x, y, w, h, branches, n, rows, extra) {
  let html = `<h3>Data with ${branches} branches</h3>`;
  for (let i = 0; i < rows; i++) html += `<p><span>{0;0;${i}}</span><span>N = ${n}</span></p>`;
  add("data-panel " + extra, x, y, w, h, html + (extra ? "" : '<div class="thumb"></div>'));
}

dataPanel(800, 183, 201, 110, 12, 8, 5, "");
dataPanel(1360, 656, 201, 160, 8, 12, 6, "roomy");

add("note", 1100, 584, 161, 101, "<p>将向量长度生成一组数量与网格数相同数目的随机数，并将其数据类型匹配为和缩放网格数据类型相同树形数据</p>");
```
